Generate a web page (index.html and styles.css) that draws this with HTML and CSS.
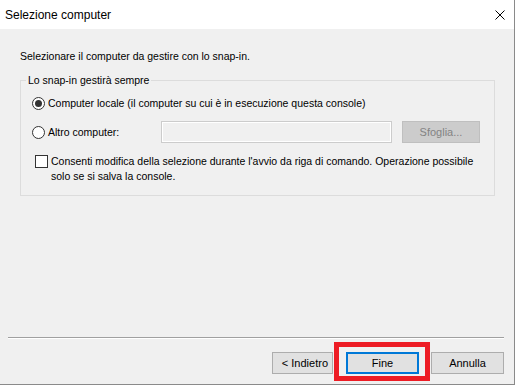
FILE: index.html
```html
<!DOCTYPE html>
<html lang="it">
<head>
  <meta charset="UTF-8" />
  <title>Selezione computer</title>
  <link rel="stylesheet" href="styles.css">
</head>
<body>

  <div class="window">
    <div class="titlebar">
      <span class="title">Selezione computer</span>
      <svg class="close" width="10" height="10" viewBox="0 0 10 10">
        <path d="M0.5 0.5 L9.5 9.5 M9.5 0.5 L0.5 9.5" stroke="#000" stroke-width="1" fill="none"/>
      </svg>
    </div>

    <div class="content">
      <div class="intro">Selezionare il computer da gestire con lo snap-in.</div>

      <fieldset class="group">
        <legend>Lo snap-in gestirà sempre</legend>

        <div class="opt">
          <span class="radio checked"></span>
          <span>Computer locale (il computer su cui è in esecuzione questa console)</span>
        </div>

        <div class="opt opt-other">
          <div class="opt-label">
            <span class="radio"></span>
            <span>Altro computer:</span>
          </div>
          <div class="textbox"></div>
          <div class="btn btn-disabled">Sfoglia...</div>
        </div>

        <div class="check-row">
          <span class="checkbox"></span>
          <span class="check-text">Consenti modifica della selezione durante l'avvio da riga di comando. Operazione possibile<br>solo se si salva la console.</span>
        </div>
      </fieldset>
    </div>

    <div class="separator"></div>

    <div class="buttons">
      <div class="btn btn-back">&lt; Indietro</div>
      <div class="btn-wrap">
        <div class="btn btn-default">Fine</div>
        <div class="highlight"></div>
      </div>
      <div class="btn btn-cancel">Annulla</div>
    </div>
  </div>

</body>
</html>
```

FILE: styles.css
```css
body {
  margin: 0;
  background: #ffffff;
  font-family: "Liberation Sans", Arial, sans-serif;
  font-size: 10.5px;
  color: #000;
}

.window {
  width: 514px;
  height: 384px;
  background: #f0f0f0;
  border-right: 1px solid #8a8a8a;
  border-bottom: 1px solid #8a8a8a;
  display: flex;
  flex-direction: column;
}

.titlebar {
  height: 29px;
  background: #ffffff;
  display: flex;
  align-items: center;
  justify-content: space-between;
  padding-left: 5px;
}

.title {
  font-size: 12px;
}

.close {
  margin-right: 9px;
}

.content {
  flex: 1;
  padding: 21px 0 0 20px;
}

.intro {
  line-height: 13px;
}

.group {
  width: 475px;
  margin: 11px 0 0 0;
  padding: 6px 0 11px 5px;
  border: 1px solid #dcdcdc;
  box-sizing: border-box;
}

.group legend {
  padding: 0 2px;
  line-height: 13px;
}

.opt {
  display: flex;
  align-items: center;
  height: 20px;
  margin-left: 6px;
  gap: 3px;
}

.opt-other {
  height: 22px;
  margin-top: 8px;
  gap: 0;
}

.opt-label {
  display: flex;
  align-items: center;
  gap: 3px;
  width: 129px;
}

.radio {
  width: 13px;
  height: 13px;
  box-sizing: border-box;
  border: 1px solid #333;
  border-radius: 50%;
  background: #fff;
  display: flex;
  align-items: center;
  justify-content: center;
  flex: none;
}

.radio.checked::after {
  content: "";
  width: 7px;
  height: 7px;
  border-radius: 50%;
  background: #333;
}

.textbox {
  width: 231px;
  height: 22px;
  box-sizing: border-box;
  border: 1px solid #cccccc;
  box-shadow: inset 0 0 0 1px #ffffff;
  background: #f0f0f0;
}

.btn {
  height: 22px;
  box-sizing: border-box;
  border: 1px solid #adadad;
  background: #e1e1e1;
  display: flex;
  align-items: center;
  justify-content: center;
  width: 73px;
  font-size: 11px;
}

.btn-disabled {
  width: 78px;
  margin-left: 10px;
  background: #cccccc;
  border-color: #bfbfbf;
  color: #838383;
}

.check-row {
  display: flex;
  align-items: flex-start;
  margin: 11px 0 0 9px;
  gap: 3px;
}

.checkbox {
  width: 13px;
  height: 13px;
  box-sizing: border-box;
  border: 1px solid #333;
  background: #fff;
  margin-top: 1px;
  flex: none;
}

.check-text {
  line-height: 15px;
}

.separator {
  height: 1px;
  margin: 0 10px 0 8px;
  background: #a0a0a0;
  border-bottom: 1px solid #ffffff;
}

.buttons {
  display: flex;
  justify-content: flex-end;
  padding: 13px 10px 10px 0;
}

.btn-back {
  width: 61px;
  margin-right: 13px;
  justify-content: flex-end;
  padding-right: 4px;
}

.btn-wrap {
  position: relative;
}

.btn-default {
  border: 2px solid #0078d7;
}

.btn-cancel {
  margin-left: 12px;
}

.highlight {
  position: absolute;
  left: -12px;
  top: -10px;
  width: 96px;
  height: 39px;
  box-sizing: border-box;
  border: 5px solid #ed1c24;
}
```
